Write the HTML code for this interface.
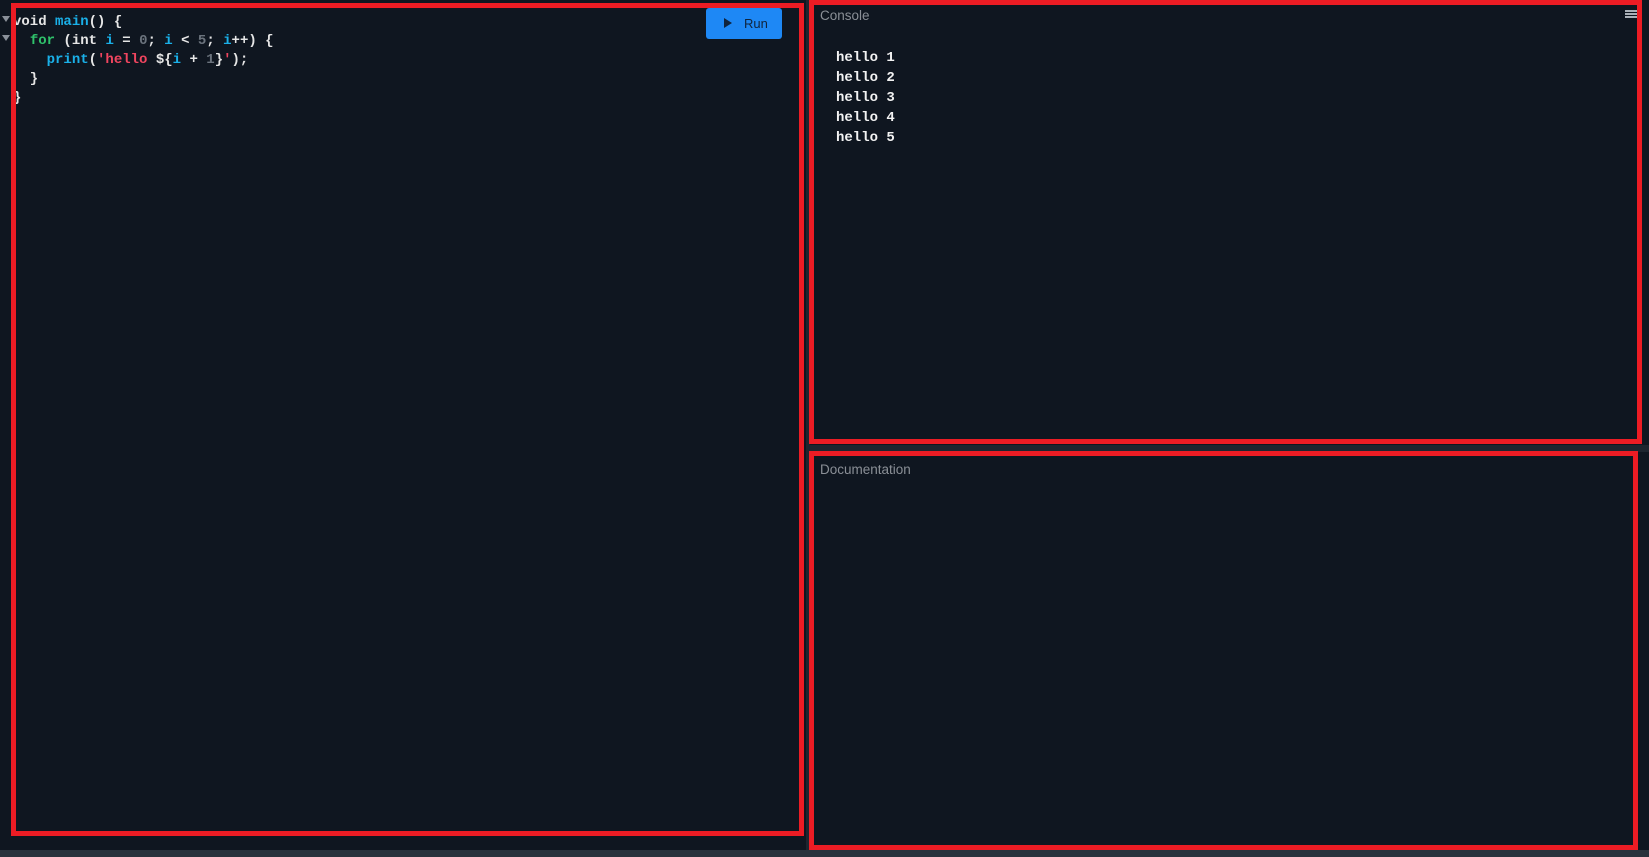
<!DOCTYPE html>
<html><head><meta charset="utf-8"><style>
html,body{margin:0;padding:0;width:1649px;height:857px;background:#0f1620;overflow:hidden;position:relative;font-family:"Liberation Sans",sans-serif}
.b{position:absolute;box-sizing:border-box;border:5px solid #ec1c24}
.code{position:absolute;left:13px;top:13px;font-family:"Liberation Mono",monospace;font-size:14px;line-height:19px;color:#e6e6e6;white-space:pre;font-weight:bold}
.k{color:#2fc26b}.f{color:#1ab0e8}.n{color:#6b737d}.s{color:#f0455f}
.out{position:absolute;left:836px;top:48px;font-family:"Liberation Mono",monospace;font-size:14px;line-height:20px;color:#f2f2f2;white-space:pre;font-weight:bold}
</style></head><body>
<div style="position:absolute;left:806px;top:0;width:4px;height:850px;background:#1d252f"></div>
<div style="position:absolute;left:810px;top:445px;width:839px;height:7px;background:#1d252f"></div>
<div style="position:absolute;left:0;top:850px;width:1649px;height:7px;background:#29323c"></div>
<div style="position:absolute;left:2px;top:16px;width:0;height:0;border-left:4px solid transparent;border-right:4px solid transparent;border-top:6px solid #8a9099"></div>
<div style="position:absolute;left:2px;top:35px;width:0;height:0;border-left:4px solid transparent;border-right:4px solid transparent;border-top:6px solid #8a9099"></div>
<div class="code">void <span class="f">main</span>() {
  <span class="k">for</span> (int <span class="f">i</span> = <span class="n">0</span>; <span class="f">i</span> &lt; <span class="n">5</span>; <span class="f">i</span>++) {
    <span class="f">print</span>(<span class="s">'hello </span>${<span class="f">i</span> + <span class="n">1</span>}<span class="s">'</span>);
  }
}</div>
<div class="b" style="left:11px;top:3px;width:793px;height:833px"></div>
<div style="position:absolute;left:706px;top:8px;width:76px;height:31px;background:#1e88f5;border-radius:3px;color:#10243d;font-size:13px;line-height:31px">
<div style="position:absolute;left:18px;top:10px;width:0;height:0;border-top:5px solid transparent;border-bottom:5px solid transparent;border-left:8px solid #10243d"></div>
<span style="position:absolute;left:38px">Run</span></div>
<div class="b" style="left:809px;top:0;width:833px;height:444px"></div>
<div style="position:absolute;left:820px;top:8px;color:#8a8f96;font-size:13.5px">Console</div>
<div style="position:absolute;left:1625px;top:10px;width:12px;height:2px;background:#aab0b8;box-shadow:0 3px 0 #aab0b8,0 6px 0 #aab0b8"></div>
<div class="out">hello 1
hello 2
hello 3
hello 4
hello 5</div>
<div class="b" style="left:809px;top:451px;width:829px;height:399px"></div>
<div style="position:absolute;left:820px;top:462px;color:#8a8f96;font-size:13.5px">Documentation</div>
</body></html>
